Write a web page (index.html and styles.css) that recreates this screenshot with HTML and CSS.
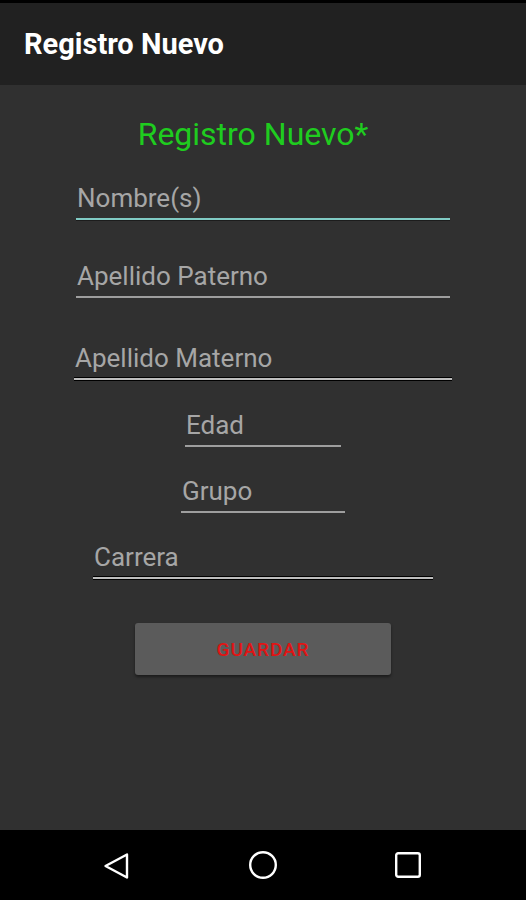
FILE: index.html
```html
<!DOCTYPE html>
<html>
<head>
<meta charset="utf-8">
<link rel="stylesheet" href="styles.css">
</head>
<body>
<div class="screen">
  <div class="status"></div>
  <header class="toolbar"><h1 class="toolbar-title">Registro Nuevo</h1></header>
  <main class="content">
    <h2 class="form-title">Registro Nuevo*</h2>
    <div class="field field-nombre"><span class="hint">Nombre(s)</span><div class="line focused"></div></div>
    <div class="field field-paterno"><span class="hint">Apellido Paterno</span><div class="line"></div></div>
    <div class="field field-materno"><span class="hint">Apellido Materno</span><div class="line dark"></div></div>
    <div class="field field-edad"><span class="hint">Edad</span><div class="line"></div></div>
    <div class="field field-grupo"><span class="hint">Grupo</span><div class="line"></div></div>
    <div class="field field-carrera"><span class="hint">Carrera</span><div class="line dark"></div></div>
    <button class="btn">GUARDAR</button>
  </main>
  <nav class="navbar">
    <svg class="nav-icon nav-back" width="28" height="30" viewBox="0 0 28 30"><path d="M24 3.5 L2.5 15 L24 26.5 Z" fill="none" stroke="#fff" stroke-width="2.4" stroke-linejoin="round"/></svg>
    <svg class="nav-icon nav-home" width="30" height="30" viewBox="0 0 30 30"><circle cx="15" cy="15" r="12.8" fill="none" stroke="#fff" stroke-width="2.4"/></svg>
    <svg class="nav-icon nav-recent" width="28" height="28" viewBox="0 0 28 28"><rect x="2.2" y="2.2" width="23.6" height="23.6" rx="2" fill="none" stroke="#fff" stroke-width="2.4"/></svg>
  </nav>
</div>
</body>
</html>
```
FILE: styles.css
```css
html, body { margin: 0; padding: 0; background: #000; }
.screen {
  width: 526px; height: 900px;
  display: flex; flex-direction: column;
  font-family: Roboto, "Noto Sans", sans-serif;
}
.status { height: 3px; background: #000; }
.toolbar {
  height: 82px; background: #212121;
  padding: 25px 0 0 24px;
  box-sizing: border-box;
}
.toolbar-title {
  margin: 0; color: #fff; font-size: 29px; font-weight: 700;
  line-height: 32px;
}
.content {
  flex: 1; background: #303030;
  display: flex; flex-direction: column; align-items: flex-start;
  padding-top: 30px;
}
.form-title {
  align-self: stretch;
  margin: 0; color: #1fcc1f; font-weight: 400; font-size: 32px;
  text-align: center; line-height: 38px;
  padding-right: 20px;
}
.field {
  box-sizing: border-box;
  display: flex; flex-direction: column;
}
.hint {
  color: #a6a6a6; font-size: 26px; line-height: 30px;
  padding-left: 1px; margin-bottom: 5px;
}
.line { height: 2px; background: #9e9e9e; }
.line.focused { background: #80cbc4; box-shadow: 0 1px 0 #1c1c1c; }
.line.dark { background: #bdbdbd; box-shadow: 0 1px 0 #000, 0 -1px 0 #000; }
.field-nombre { margin-left: 76px; width: 374px; margin-top: 30px; }
.field-paterno { margin-left: 76px; width: 374px; margin-top: 41px; }
.field-materno { margin-left: 74px; width: 378px; margin-top: 45px; }
.field-edad { margin-left: 185px; width: 156px; margin-top: 30px; }
.field-grupo { margin-left: 181px; width: 164px; margin-top: 29px; }
.field-carrera { margin-left: 93px; width: 340px; margin-top: 29px; }
.btn {
  margin: 44px 0 0 135px; width: 256px; height: 52px;
  background: #5b5b5b; border: none; border-radius: 3px;
  color: #e01414; font-family: Roboto, sans-serif; font-size: 19px; font-weight: 500;
  letter-spacing: 0.9px;
  box-shadow: 0 2px 3px rgba(0,0,0,0.45);
}
.navbar {
  height: 70px; background: #000;
  display: flex; align-items: center;
  padding-left: 103px;
}
.nav-icon { display: block; }
.nav-back { margin-right: 117px; margin-top: 1px; }
.nav-home { margin-right: 116px; }
```
